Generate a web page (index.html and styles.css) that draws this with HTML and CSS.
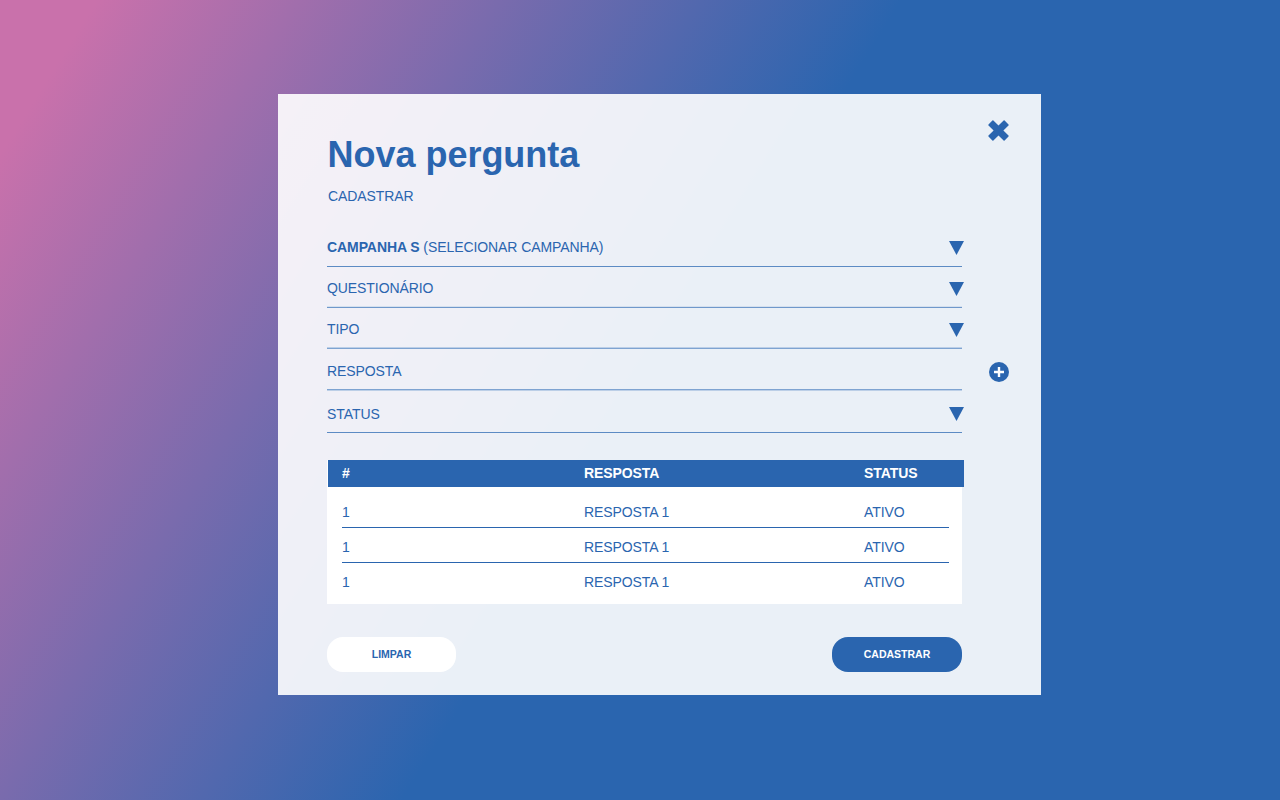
FILE: index.html
```
<!DOCTYPE html>
<html lang="pt-BR">
<head>
<meta charset="utf-8">
<title>Nova pergunta</title>
<link rel="stylesheet" href="styles.css">
</head>
<body>
<main class="modal">
  <button class="icon-button close" aria-label="Fechar">
    <svg width="21" height="21" viewBox="0 0 21 21"><path d="M5.4 .5 10.5 5.6 15.6 .5Q16.1 0 16.6 .5L20.5 4.4Q21 4.9 20.5 5.4L15.4 10.5 20.5 15.6Q21 16.1 20.5 16.6L16.6 20.5Q16.1 21 15.6 20.5L10.5 15.4 5.4 20.5Q4.9 21 4.4 20.5L.5 16.6Q0 16.1 .5 15.6L5.6 10.5 .5 5.4Q0 4.9 .5 4.4L4.4 .5Q4.9 0 5.4 .5Z" fill="currentColor"/></svg>
  </button>
  <header class="heading">
    <h1 class="title">Nova pergunta</h1>
    <p class="subtitle">CADASTRAR</p>
  </header>
  <form class="fields">
    <div class="field field-campaign"><span><b>CAMPANHA S</b> (SELECIONAR CAMPANHA)</span><svg class="arrow" width="15" height="14" viewBox="0 0 15 14"><path d="M0 0H15L7.5 14Z"/></svg></div>
    <div class="field field-quiz"><span>QUESTIONÁRIO</span><svg class="arrow" width="15" height="14" viewBox="0 0 15 14"><path d="M0 0H15L7.5 14Z"/></svg></div>
    <div class="field field-type"><span>TIPO</span><svg class="arrow" width="15" height="14" viewBox="0 0 15 14"><path d="M0 0H15L7.5 14Z"/></svg></div>
    <div class="field field-answer"><span>RESPOSTA</span><svg class="add" width="20" height="20" viewBox="0 0 20 20"><circle cx="10" cy="10" r="10"/><path d="M10 5V15M5 10H15" stroke="#fff" stroke-width="2.4"/></svg></div>
    <div class="field field-status"><span>STATUS</span><svg class="arrow" width="15" height="14" viewBox="0 0 15 14"><path d="M0 0H15L7.5 14Z"/></svg></div>
  </form>
  <section class="table">
    <div class="row row-head"><span>#</span><span>RESPOSTA</span><span>STATUS</span></div>
    <div class="rows">
      <div class="row"><span>1</span><span>RESPOSTA 1</span><span>ATIVO</span></div>
      <div class="row"><span>1</span><span>RESPOSTA 1</span><span>ATIVO</span></div>
      <div class="row"><span>1</span><span>RESPOSTA 1</span><span>ATIVO</span></div>
    </div>
  </section>
  <footer class="actions">
    <button class="button button-light">LIMPAR</button>
    <button class="button button-blue">CADASTRAR</button>
  </footer>
</main>
</body>
</html>
```

FILE: styles.css
```
* { box-sizing: border-box; }

body {
  margin: 0;
  height: 800px;
  padding: 94px 0 0 278px;
  overflow: hidden;
  background: linear-gradient(122deg, #c971ab 82px, #2a65af 765px);
  color: #2a65af;
  font: 14px/16px "Liberation Sans", Arial, sans-serif;
  letter-spacing: -.08px;
}

.modal {
  position: relative;
  width: 763px;
  height: 601px;
  padding: 40px 79px 0 49px;
  background: rgba(255, 255, 255, .9);
}

.icon-button {
  padding: 0;
  border: 0;
  background: none;
  color: inherit;
}

.close {
  position: absolute;
  top: 26px;
  right: 32px;
  width: 21px;
  height: 21px;
}

.close svg { display: block; }

.title {
  margin: 0;
  padding-left: .5px;
  font-size: 36px;
  line-height: 42px;
  letter-spacing: -.02px;
}

.subtitle { margin: 12px 0 0; padding-left: 1px; }

.fields { margin-top: 23px; }

.field {
  display: flex;
  justify-content: space-between;
  align-items: flex-end;
  height: 41px;
  padding-bottom: 11px;
  border-bottom: 1px solid #5c8bc4;
}

.field svg { flex: none; fill: #2a65af; }
.arrow { margin: 0 -2px 0 0; }

.field-campaign { height: 40px; }
.field-quiz { border-color: #6f98cb; box-shadow: inset 0 -1px #d5e0ee; }
.field-type { border-color: #7ea3d1; box-shadow: inset 0 -1px #bccfe7; }
.field-answer { padding-bottom: 10px; border-color: #7ea3d1; box-shadow: 0 1px #bccfe7; }
.field-status { height: 43px; padding-bottom: 10px; }
.field-status .arrow { margin-bottom: 1px; }
.add { margin: 0 -47px -3px 0; }

.table {
  height: 144px;
  margin-top: 27px;
  background: #fff;
}

.row {
  display: grid;
  grid-template-columns: 242px 280px 1fr;
  align-items: center;
  height: 35px;
}

.row-head {
  height: 27px;
  margin: 0 -2px 0 1px;
  padding: 0 0 2px 14px;
  background: #2a65af;
  color: #fff;
  font-weight: bold;
}

.rows { padding: 6px 13px 0 15px; }
.rows .row { padding-top: 4px; border-bottom: 1px solid #2a65af; }
.rows .row:last-child { border-color: transparent; }

.actions {
  display: flex;
  justify-content: space-between;
  margin-top: 33px;
}

.button {
  width: 130px;
  height: 35px;
  padding: 0;
  border: 0;
  border-radius: 16px;
  font: bold 10.5px/13px "Liberation Sans", Arial, sans-serif;
}

.button-light { width: 129px; background: #fff; color: #2a65af; }
.button-blue { background: #2a65af; color: #fff; }
```
